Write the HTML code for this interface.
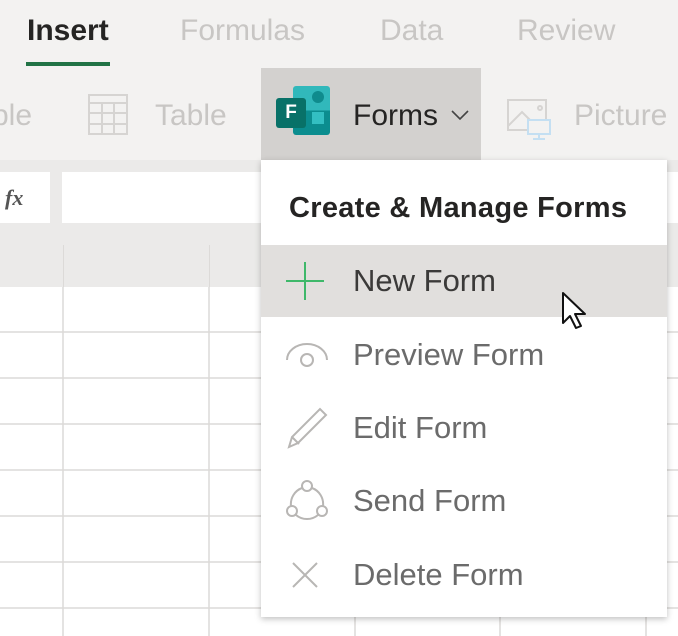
<!DOCTYPE html>
<html><head><style>
*{margin:0;padding:0;box-sizing:border-box}
body{width:678px;height:636px;overflow:hidden;background:#fff;font-family:"Liberation Sans",sans-serif;position:relative}
.a{position:absolute}
.t{font-size:30px;white-space:nowrap}
.mi{position:absolute;left:0;width:406px;height:72px}
.mi span{position:absolute;left:92px;top:50%;transform:translateY(-50%);font-size:31px;color:#6b6b6b;white-space:nowrap}
.mi svg{position:absolute;left:24px;top:50%;transform:translateY(-50%)}
</style></head><body>
<div class="a" style="left:0;top:0;width:678px;height:160px;background:#f3f2f1"></div>
<div class="a t" style="left:27px;top:14px;color:#252423;font-weight:bold">Insert</div>
<div class="a" style="left:26px;top:62px;width:84px;height:4px;background:#217346"></div>
<div class="a t" style="left:180px;top:14px;color:#c8c6c4">Formulas</div>
<div class="a t" style="left:380px;top:14px;color:#c8c6c4">Data</div>
<div class="a t" style="left:517px;top:14px;color:#c8c6c4">Review</div>
<div class="a t" style="left:-8px;top:99px;color:#c8c6c4">ble</div>
<svg class="a" style="left:87px;top:93px" width="44" height="44"><g fill="none" stroke="#d6d4d2" stroke-width="2"><rect x="2" y="2" width="38" height="39"/><line x1="2" y1="10" x2="40" y2="10"/><line x1="2" y1="20" x2="40" y2="20"/><line x1="2" y1="31" x2="40" y2="31"/><line x1="15" y1="10" x2="15" y2="41"/><line x1="27" y1="10" x2="27" y2="41"/></g></svg>
<div class="a t" style="left:155px;top:99px;color:#c8c6c4">Table</div>
<div class="a" style="left:261px;top:68px;width:220px;height:92px;background:#d3d1cf"></div>
<div class="a" style="left:293px;top:86px;width:37px;height:49px;border-radius:3px;background:linear-gradient(#31b8bb 50%,#0b8d8f 50%)"></div>
<div class="a" style="left:312px;top:91px;width:12px;height:12px;border-radius:50%;background:#0f8b8d"></div>
<div class="a" style="left:312px;top:112px;width:12px;height:12px;background:#33bfc2"></div>
<div class="a" style="left:276px;top:98px;width:30px;height:30px;border-radius:3px;background:#087168;color:#fff;font-weight:bold;font-size:19px;line-height:30px;text-align:center">F</div>
<div class="a t" style="left:353px;top:99px;color:#252423">Forms</div>
<svg class="a" style="left:450px;top:108px" width="22" height="14"><path d="M2 3l8 8 8-8" fill="none" stroke="#444" stroke-width="1.6"/></svg>
<svg class="a" style="left:504px;top:96px" width="48" height="44"><g fill="none" stroke="#d6d4d2" stroke-width="2"><rect x="4" y="4" width="38" height="30"/><path d="M4 30l14-14 8 8"/><circle cx="36" cy="12" r="2"/></g><g fill="none" stroke="#c4dff2" stroke-width="2"><rect x="24" y="24" width="22" height="14" fill="#f3f2f1"/><line x1="35" y1="38" x2="35" y2="43"/><line x1="29" y1="43" x2="41" y2="43"/></g></svg>
<div class="a t" style="left:574px;top:99px;color:#c8c6c4">Picture</div>
<div class="a" style="left:0;top:160px;width:678px;height:127px;background:#ebeae9"></div>
<div class="a" style="left:0;top:172px;width:50px;height:51px;background:#fff;font-family:'Liberation Serif',serif;font-style:italic;font-weight:bold;font-size:22px;color:#555;line-height:51px;padding-left:5px">fx</div>
<div class="a" style="left:62px;top:172px;width:616px;height:51px;background:#fff"></div>
<div class="a" style="left:63px;top:245px;width:1px;height:42px;background:#dcdad8"></div>
<div class="a" style="left:209px;top:245px;width:1px;height:42px;background:#dcdad8"></div>
<svg class="a" style="left:0;top:287px" width="678" height="349"><g stroke="#dcdad8" stroke-width="1.5"><line x1="63" y1="0" x2="63" y2="349"/><line x1="209" y1="0" x2="209" y2="349"/><line x1="355" y1="0" x2="355" y2="349"/><line x1="500" y1="0" x2="500" y2="349"/><line x1="646" y1="0" x2="646" y2="349"/><line x1="0" y1="45" x2="678" y2="45"/><line x1="0" y1="91" x2="678" y2="91"/><line x1="0" y1="137" x2="678" y2="137"/><line x1="0" y1="183" x2="678" y2="183"/><line x1="0" y1="229" x2="678" y2="229"/><line x1="0" y1="275" x2="678" y2="275"/><line x1="0" y1="321" x2="678" y2="321"/></g></svg>
<div class="a" style="left:261px;top:160px;width:406px;height:457px;background:#fff;box-shadow:0 2px 6px rgba(0,0,0,.25)">
<div class="a" style="left:28px;top:32px;font-size:29px;font-weight:bold;color:#252423;white-space:nowrap;letter-spacing:0.3px">Create &amp; Manage Forms</div>
<div class="mi" style="top:85px;background:#e1dfdd"><svg width="40" height="40"><path d="M20 1v38M1 20h38" stroke="#3fb86a" stroke-width="2"/></svg><span style="color:#3b3a39">New Form</span></div>
<div class="mi" style="top:159px"><svg width="44" height="30"><g fill="none" stroke="#b8b6b4" stroke-width="2"><path d="M2 20a20 16 0 0 1 40 0"/><circle cx="22" cy="20" r="6"/></g></svg><span>Preview Form</span></div>
<div class="mi" style="top:232px"><svg width="44" height="44"><g fill="none" stroke="#b8b6b4" stroke-width="2"><path d="M4 41l3-10 28-28 6 6-28 28zM7 31l7 7"/></g></svg><span>Edit Form</span></div>
<div class="mi" style="top:305px"><svg width="44" height="44"><g fill="none" stroke="#b8b6b4" stroke-width="2"><circle cx="22" cy="7" r="5"/><circle cx="7" cy="32" r="5"/><circle cx="37" cy="32" r="5"/><path d="M17 9a17 17 0 0 0-11 18M27 9a17 17 0 0 1 11 18M11 36a17 17 0 0 0 22 0"/></g></svg><span>Send Form</span></div>
<div class="mi" style="top:379px"><svg width="40" height="40"><path d="M8 8l24 24M32 8L8 32" stroke="#b8b6b4" stroke-width="2"/></svg><span>Delete Form</span></div>
</div>
<svg class="a" style="left:561px;top:291px" width="30" height="40"><path d="M2 2v30l7-7 6 12 5-2-6-12h10z" fill="#fff" stroke="#111" stroke-width="2" stroke-linejoin="round"/></svg>
</body></html>
